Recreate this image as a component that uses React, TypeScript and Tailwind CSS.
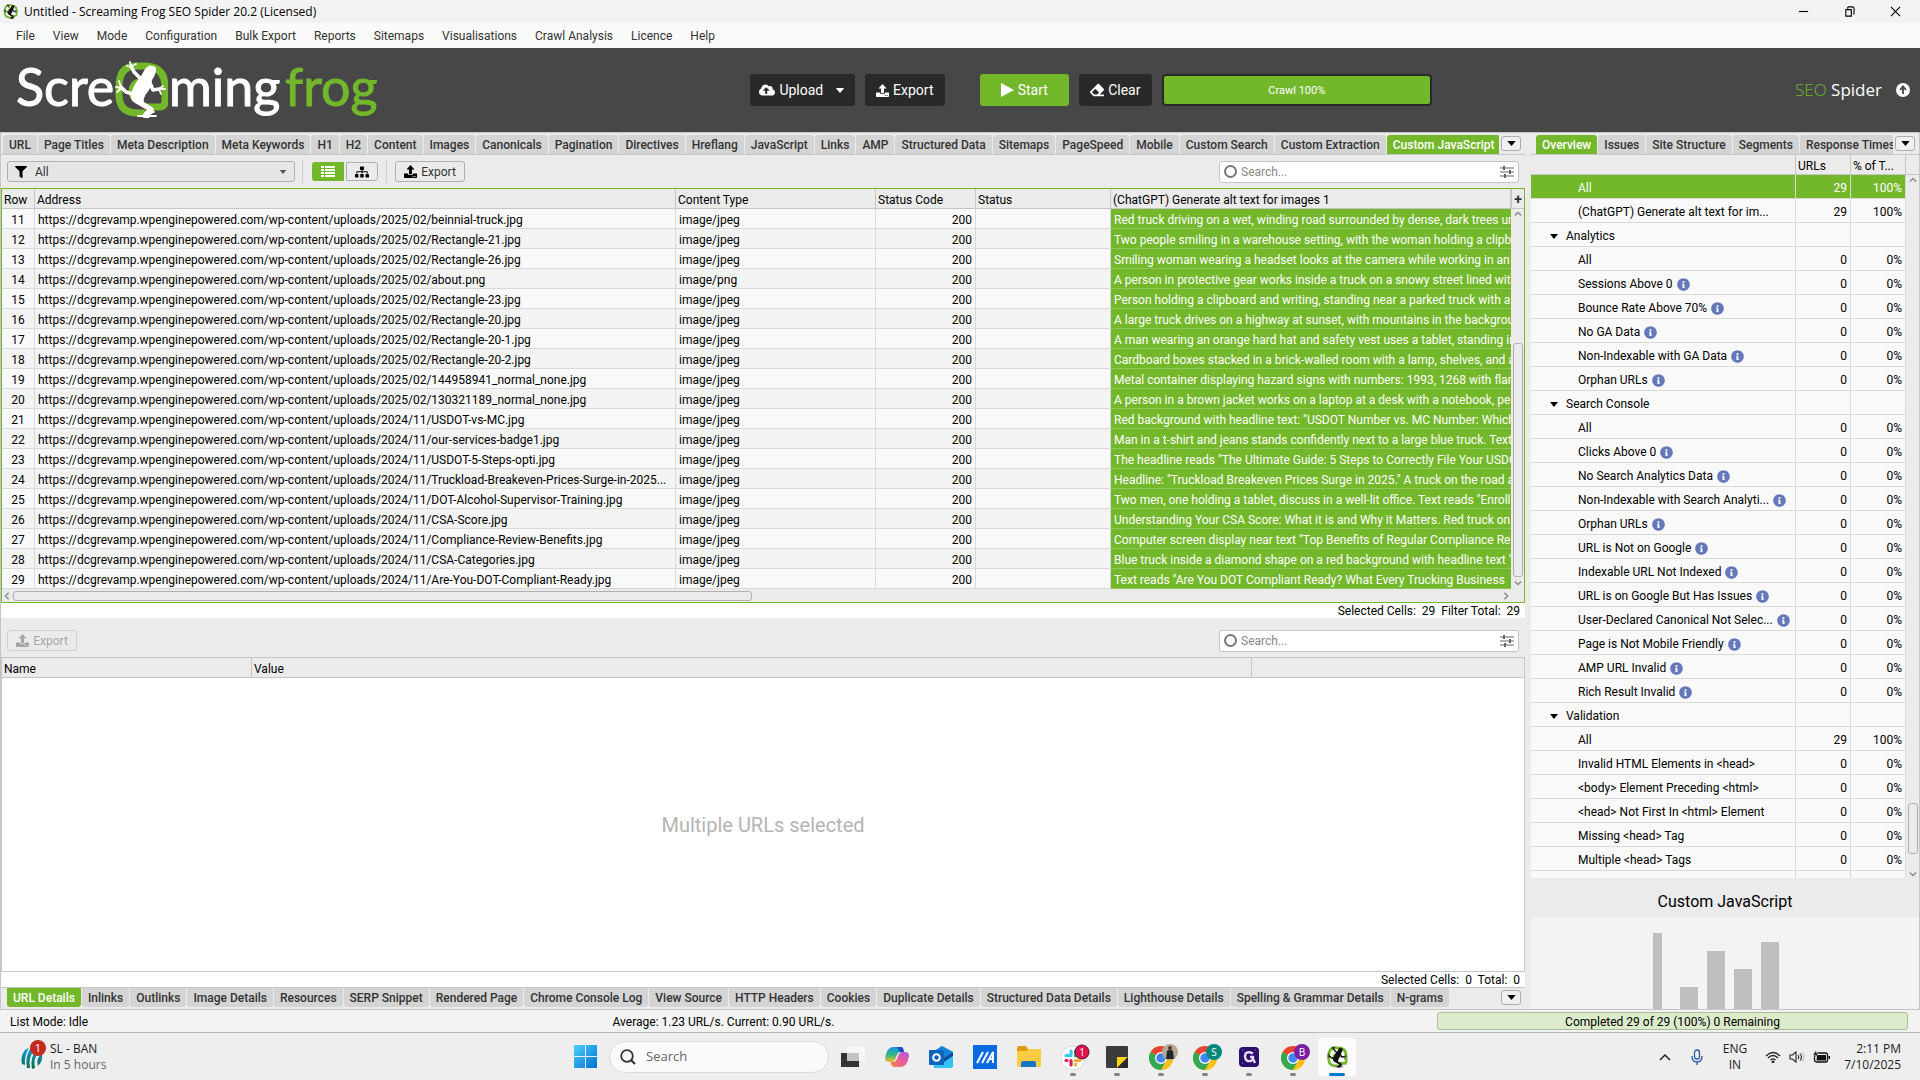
import type { ReactNode } from "react";
import { FaCloudUploadAlt, FaEraser, FaFilter, FaInfoCircle, FaSitemap } from "react-icons/fa";

const menu = ["File", "View", "Mode", "Configuration", "Bulk Export", "Reports", "Sitemaps", "Visualisations", "Crawl Analysis", "Licence", "Help"];

const mainTabs = [
  "URL", "Page Titles", "Meta Description", "Meta Keywords", "H1", "H2", "Content", "Images", "Canonicals",
  "Pagination", "Directives", "Hreflang", "JavaScript", "Links", "AMP", "Structured Data", "Sitemaps",
  "PageSpeed", "Mobile", "Custom Search", "Custom Extraction", "Custom JavaScript",
];

const sideTabs = ["Overview", "Issues", "Site Structure", "Segments", "Response Times"];

const detailTabs = [
  "URL Details", "Inlinks", "Outlinks", "Image Details", "Resources", "SERP Snippet", "Rendered Page",
  "Chrome Console Log", "View Source", "HTTP Headers", "Cookies", "Duplicate Details",
  "Structured Data Details", "Lighthouse Details", "Spelling & Grammar Details", "N-grams",
];

const base = "https://dcgrevamp.wpenginepowered.com/wp-content/uploads/";

const rows = [
  { path: "2025/02/beinnial-truck.jpg", alt: "Red truck driving on a wet, winding road surrounded by dense, dark trees un" },
  { path: "2025/02/Rectangle-21.jpg", alt: "Two people smiling in a warehouse setting, with the woman holding a clipb" },
  { path: "2025/02/Rectangle-26.jpg", alt: "Smiling woman wearing a headset looks at the camera while working in an" },
  { path: "2025/02/about.png", alt: "A person in protective gear works inside a truck on a snowy street lined wit" },
  { path: "2025/02/Rectangle-23.jpg", alt: "Person holding a clipboard and writing, standing near a parked truck with a" },
  { path: "2025/02/Rectangle-20.jpg", alt: "A large truck drives on a highway at sunset, with mountains in the backgrou" },
  { path: "2025/02/Rectangle-20-1.jpg", alt: "A man wearing an orange hard hat and safety vest uses a tablet, standing in" },
  { path: "2025/02/Rectangle-20-2.jpg", alt: "Cardboard boxes stacked in a brick-walled room with a lamp, shelves, and a" },
  { path: "2025/02/144958941_normal_none.jpg", alt: "Metal container displaying hazard signs with numbers: 1993, 1268 with flam" },
  { path: "2025/02/130321189_normal_none.jpg", alt: "A person in a brown jacket works on a laptop at a desk with a notebook, pe" },
  { path: "2024/11/USDOT-vs-MC.jpg", alt: 'Red background with headline text: "USDOT Number vs. MC Number: Which' },
  { path: "2024/11/our-services-badge1.jpg", alt: "Man in a t-shirt and jeans stands confidently next to a large blue truck. Text" },
  { path: "2024/11/USDOT-5-Steps-opti.jpg", alt: 'The headline reads "The Ultimate Guide: 5 Steps to Correctly File Your USDO' },
  { path: "2024/11/Truckload-Breakeven-Prices-Surge-in-2025...", alt: 'Headline: "Truckload Breakeven Prices Surge in 2025." A truck on the road a' },
  { path: "2024/11/DOT-Alcohol-Supervisor-Training.jpg", alt: 'Two men, one holding a tablet, discuss in a well-lit office. Text reads "Enroll' },
  { path: "2024/11/CSA-Score.jpg", alt: "Understanding Your CSA Score: What it is and Why it Matters. Red truck on" },
  { path: "2024/11/Compliance-Review-Benefits.jpg", alt: 'Computer screen display near text "Top Benefits of Regular Compliance Re' },
  { path: "2024/11/CSA-Categories.jpg", alt: 'Blue truck inside a diamond shape on a red background with headline text "' },
  { path: "2024/11/Are-You-DOT-Compliant-Ready.jpg", alt: 'Text reads "Are You DOT Compliant Ready? What Every Trucking Business' },
];

type TreeRow = { label: string; group?: boolean; info?: boolean; urls?: number; pct?: string };

const tree: TreeRow[] = [
  { label: "All", urls: 29, pct: "100%" },
  { label: "(ChatGPT) Generate alt text for im...", urls: 29, pct: "100%" },
  { label: "Analytics", group: true },
  { label: "All" },
  { label: "Sessions Above 0", info: true },
  { label: "Bounce Rate Above 70%", info: true },
  { label: "No GA Data", info: true },
  { label: "Non-Indexable with GA Data", info: true },
  { label: "Orphan URLs", info: true },
  { label: "Search Console", group: true },
  { label: "All" },
  { label: "Clicks Above 0", info: true },
  { label: "No Search Analytics Data", info: true },
  { label: "Non-Indexable with Search Analyti...", info: true },
  { label: "Orphan URLs", info: true },
  { label: "URL is Not on Google", info: true },
  { label: "Indexable URL Not Indexed", info: true },
  { label: "URL is on Google But Has Issues", info: true },
  { label: "User-Declared Canonical Not Selec...", info: true },
  { label: "Page is Not Mobile Friendly", info: true },
  { label: "AMP URL Invalid", info: true },
  { label: "Rich Result Invalid", info: true },
  { label: "Validation", group: true },
  { label: "All", urls: 29, pct: "100%" },
  { label: "Invalid HTML Elements in <head>" },
  { label: "<body> Element Preceding <html>" },
  { label: "<head> Not First In <html> Element" },
  { label: "Missing <head> Tag" },
  { label: "Multiple <head> Tags" },
];

function Frog({ color, className }: { color: string; className?: string }) {
  return (
    <svg viewBox="0 0 54 58" className={className} aria-hidden="true">
      <path d="M32 46H46q5 0 5-6V26Q51 5 30 5H22Q5 5 5 26v8Q5 52 24 52h7" fill="none" stroke="#73b72b" strokeWidth="7" />
      <path d="M36 20Q18 17 17 30q0 8 9 9" fill="none" stroke="#73b72b" strokeWidth="5" />
      <path d="M31 8q4-5 7-3 5 0 4 5-1 5-4 9-1 9-6 14-3 5-2 8l8 5q4 2 0 6l-3 5h-5l3-8-12-7q-7-4-3-12 3-9 8-13z" fill={color} />
      <g fill="none" stroke={color} strokeLinecap="round" strokeLinejoin="round">
        <path d="M27 18 20 11 17 5M36 22l3 7 6-1M19 33l-7-2-5-5M33 51l-3 4" strokeWidth="3.6" />
        <path d="M17 6 13 5M17 5 16 1M18 5l4-2M45 28l4-3M45 28l6 0M45 28l2 5M7 27l-5-1M7 26 5 20M8 27l-5 4M30 55h-6M30 55h12M34 53l6-2M32 54l5-7" strokeWidth="1.8" />
      </g>
    </svg>
  );
}

function UploadIcon({ className }: { className?: string }) {
  return (
    <svg viewBox="0 0 16 16" className={className} fill="currentColor" aria-hidden="true">
      <path d="M8 0 3 5.500h3.200V11h3.600V5.500H13z" />
      <path fillRule="evenodd" d="M0 10.500h5V12h6v-1.500h5V15q0 1-1 1H1q-1 0-1-1zM10.500 13.500v1H12v-1zM13 13.500v1h1.500v-1z" />
    </svg>
  );
}

function Caret({ className }: { className?: string }) {
  return (
    <svg viewBox="0 0 10 6" className={className} fill="currentColor" aria-hidden="true">
      <path d="M0 0h10L5 6z" />
    </svg>
  );
}

function Chevron({ className }: { className: string }) {
  return (
    <svg viewBox="0 0 10 10" className={`size-2 shrink-0 ${className}`} fill="none" stroke="#8c8c8c" strokeWidth="1.8" aria-hidden="true">
      <path d="M1 7l4-4 4 4" />
    </svg>
  );
}

function Tabs({ items, active, bottom }: { items: string[]; active: string; bottom?: boolean }) {
  return (
    <div className="flex min-w-0 flex-1 gap-px overflow-hidden">
      {items.map((t) => (
        <button
          key={t}
          className={`h-[19px] shrink-0 px-1.5 text-xs font-medium ${bottom ? "rounded-b-[3px] leading-[18px]" : "rounded-t-[3px] leading-5"} ${
            t === active ? "bg-[#73b72b] text-white" : "bg-[#d4d4d4] text-[#333]"
          }`}
        >
          {t}
        </button>
      ))}
    </div>
  );
}

function MoreTabs({ label }: { label: string }) {
  return (
    <button aria-label={label} className="flex h-[15px] w-5 shrink-0 items-center justify-center rounded-[3px] border border-[#adadad] bg-[#f0f0f0] text-black">
      <Caret className="h-[5px] w-[9px]" />
    </button>
  );
}

function SearchBox({ label }: { label: string }) {
  return (
    <div className="ml-auto flex h-[22px] w-[300px] items-center rounded-[3px] border border-[#c4c4c4] bg-white px-1 text-[#777]">
      <span className="size-[13px] rounded-full border-2 border-[#777]" />
      <input aria-label={label} placeholder="Search..." className="min-w-0 flex-1 bg-transparent px-1 text-xs outline-none placeholder:text-[#888]" />
      <svg viewBox="0 0 14 12" className="h-3 w-3.5" stroke="#666" strokeWidth="1" aria-hidden="true">
        <path d="M0 2h14M0 6h14M0 10h14" />
        <path d="M4 0v4M10 4v4M5 8v4" strokeWidth="2" />
      </svg>
    </div>
  );
}

function DarkButton({ children, className }: { children: ReactNode; className: string }) {
  return <button className={`flex h-8 items-center justify-center gap-1 rounded-[3px] text-sm text-white ${className}`}>{children}</button>;
}

function Header() {
  return (
    <header className="flex h-[84px] shrink-0 items-center bg-[#474747]">
      <div className="w-[39%]">
        <svg viewBox="0 0 400 84" className="h-[84px] w-[400px]" role="img" aria-label="Screaming frog">
          <g fontFamily="Lato, sans-serif" fontSize="52" strokeWidth="1">
            <text x="16" y="58" fill="#fff" stroke="#fff">Scre</text>
            <text x="169" y="58" fill="#fff" stroke="#fff">ming</text>
            <text x="285" y="58" fill="#73b72b" stroke="#73b72b">frog</text>
          </g>
          <svg x="114" y="13" width="54" height="58"><Frog color="#fff" /></svg>
        </svg>
      </div>
      <DarkButton className="ml-px w-[105px] bg-[#292929]">
        <FaCloudUploadAlt className="size-4" />
        Upload
        <Caret className="ml-2 h-[5px] w-[10px]" />
      </DarkButton>
      <DarkButton className="ml-2.5 w-20 bg-[#292929]">
        <UploadIcon className="size-[13px]" />
        Export
      </DarkButton>
      <DarkButton className="ml-[35px] w-[89px] bg-[#73b72b]">
        <svg viewBox="0 0 13 14" className="h-3.5 w-[13px]" fill="currentColor" aria-hidden="true"><path d="M0 0l13 7-13 7z" /></svg>
        Start
      </DarkButton>
      <DarkButton className="ml-2.5 w-[73px] bg-[#292929]">
        <FaEraser className="size-3.5" />
        Clear
      </DarkButton>
      <div className="ml-2.5 flex h-8 w-[270px] items-center justify-center rounded-[4px] border-2 border-[#292929] bg-[#73b72b] pt-0.5 text-[11px] text-white">
        Crawl 100%
      </div>
      <div className="ml-auto flex items-center pr-2.5">
        <span className="font-['Open_Sans',sans-serif] text-[17px] text-white">
          <span className="font-light text-[#73b72b]">SEO</span> Spider
        </span>
        <svg viewBox="0 0 14 14" className="ml-3.5 size-3.5" aria-hidden="true">
          <circle cx="7" cy="7" r="7" fill="#fff" />
          <path d="M7 11V4M4 7l3-3.500L10 7" fill="none" stroke="#474747" strokeWidth="1.8" />
        </svg>
      </div>
    </header>
  );
}

function CrawlTable() {
  const head = "border-r border-b border-[#c6c6c6] bg-[#ebebeb] px-0.5 pt-[3px] text-left font-normal";
  const cell = "border-r border-b border-[#dadada] pt-[3px]";
  return (
    <div className="border border-[#73b72b] bg-[#ebebeb]">
      <div className="flex">
        <table className="w-full table-fixed border-separate border-spacing-0 text-xs leading-4 text-black">
          <colgroup>
            <col className="w-[33px]" />
            <col className="w-[641px]" />
            <col className="w-[200px]" />
            <col className="w-[100px]" />
            <col className="w-[135px]" />
            <col />
          </colgroup>
          <thead>
            <tr>
              <th className={head}>Row</th>
              <th className={head}>Address</th>
              <th className={head}>Content Type</th>
              <th className={head}>Status Code</th>
              <th className={head}>Status</th>
              <th className={head}>(ChatGPT) Generate alt text for images 1</th>
            </tr>
          </thead>
          <tbody>
            {rows.map((r, i) => (
              <tr key={r.path} className="bg-[#f9f9f9] even:bg-[#f3f3f3]">
                <td className={`${cell} text-center`}>{i + 11}</td>
                <td className={`${cell} overflow-hidden px-[3px] whitespace-nowrap`}>{base + r.path}</td>
                <td className={`${cell} px-[3px]`}>{r.path.endsWith(".png") ? "image/png" : "image/jpeg"}</td>
                <td className={`${cell} px-[3px] text-right`}>200</td>
                <td className={cell} />
                <td className="overflow-hidden border-b border-[#8fc65a] bg-[#73b72b] pt-[3px] pl-[3px] whitespace-nowrap text-white">{r.alt}</td>
              </tr>
            ))}
          </tbody>
        </table>
        <div className="flex w-[13px] shrink-0 flex-col items-center">
          <button aria-label="Add column" className="flex h-5 w-full items-center justify-center border-b border-l border-[#c6c6c6] text-sm leading-none font-bold text-[#333]">+</button>
          <Chevron className="mt-px" />
          <div className="mt-auto h-[234px] w-2.5 rounded-[3px] border border-[#b0b0b0]" />
          <Chevron className="my-0.5 rotate-180" />
        </div>
      </div>
      <div className="flex h-[13px] items-center pr-3.5">
        <Chevron className="ml-px -rotate-90" />
        <div className="ml-0.5 h-2.5 w-[49%] rounded-[3px] border border-[#b0b0b0]" />
        <Chevron className="ml-auto rotate-90" />
      </div>
    </div>
  );
}

function Overview() {
  const line = "border-r border-b border-[#dadada] pt-[3px]";
  const head = "border-r border-b border-[#c6c6c6] px-0.5 pt-[3px] text-left font-normal";
  return (
    <aside className="flex w-[389px] shrink-0 flex-col border-r border-[#c6c6c6]">
      <div className="flex h-[22px] shrink-0 items-end gap-0.5 border-b border-[#c6c6c6] pr-1 pl-[5px]">
        <Tabs items={sideTabs} active="Overview" />
        <div className="self-center"><MoreTabs label="More overview tabs" /></div>
      </div>
      <div className="flex min-h-0 flex-1">
        <div className="min-w-0 flex-1 overflow-hidden">
          <table className="w-full table-fixed border-separate border-spacing-0 text-xs text-black">
            <colgroup>
              <col />
              <col className="w-[55px]" />
              <col className="w-[55px]" />
            </colgroup>
            <thead className="leading-4">
              <tr>
                <th className={head} aria-label="Filter" />
                <th className={head}>URLs</th>
                <th className={head}>% of T...</th>
              </tr>
            </thead>
            <tbody className="leading-5">
              {tree.map((t, i) => (
                <tr key={i} className={i === 0 ? "bg-[#73b72b] text-white" : "bg-[#f9f9f9]"}>
                  <td className={`${line} whitespace-nowrap ${i === 0 ? "border-[#8fc65a]" : ""} ${t.group ? "pl-[19px]" : "pl-[47px]"}`}>
                    <div className="flex items-center gap-1">
                      {t.group && <Caret className="mr-1 h-[7px] w-2" />}
                      {t.label}
                      {t.info && <FaInfoCircle className="size-[13px] text-[#6678bb]" />}
                    </div>
                  </td>
                  <td className={`${line} pr-[3px] text-right ${i === 0 ? "border-[#8fc65a]" : ""}`}>{!t.group && (t.urls ?? 0)}</td>
                  <td className={`${line} pr-[3px] text-right ${i === 0 ? "border-[#8fc65a]" : ""}`}>{!t.group && (t.pct ?? "0%")}</td>
                </tr>
              ))}
              <tr className="bg-[#f9f9f9]">
                <td className={`${line} h-6`} />
                <td className={line} />
                <td className={line} />
              </tr>
            </tbody>
          </table>
        </div>
        <div className="flex w-[13px] shrink-0 flex-col items-center">
          <div className="h-5 w-full shrink-0 border-b border-[#c6c6c6]" />
          <Chevron className="mt-px" />
          <div className="mt-auto h-[51px] w-2.5 rounded-[3px] border border-[#b0b0b0]" />
          <Chevron className="mt-4 rotate-180" />
        </div>
      </div>
      <h2 className="flex h-[39px] shrink-0 items-center justify-center pt-2 text-base text-black">Custom JavaScript</h2>
      <div className="flex h-[92px] shrink-0 justify-center bg-[#f3f3f3] pr-[18px]">
        <svg viewBox="0 0 126 92" className="h-[92px] w-[126px]" fill="#bfbfbf" role="img" aria-label="Custom JavaScript chart">
          <path d="M0 16h9v76H0zM27 70h18v22H27zM54 34h18v58H54zM81 52h18v40H81zM108 25h18v67h-18z" />
        </svg>
      </div>
    </aside>
  );
}

function Chrome({ badge }: { badge: ReactNode }) {
  return (
    <svg viewBox="0 0 30 26" className="ml-[5px] h-[26px] w-[30px]" aria-hidden="true">
      <circle cx="12" cy="14" r="12" fill="#fbc116" />
      <path d="M12 14 1.600 8A12 12 0 0 1 22.400 8H12z" fill="#ea4335" />
      <path d="M12 14 1.600 8A12 12 0 0 0 12 26l5.200-9z" fill="#34a853" />
      <path d="M12 8H22.400A12 12 0 0 1 12 26l5.200-9z" fill="#fbc116" />
      <circle cx="12" cy="14" r="6" fill="#fff" />
      <circle cx="12" cy="14" r="4.700" fill="#4285f4" />
      {badge}
    </svg>
  );
}

function Letter({ fill, children }: { fill: string; children: string }) {
  return (
    <>
      <circle cx="21" cy="8" r="8" fill={fill} />
      <text x="21" y="11.500" textAnchor="middle" fontSize="10" fill="#fff">{children}</text>
    </>
  );
}

const apps: { name: string; open?: boolean; icon: ReactNode }[] = [
  {
    name: "Task view",
    icon: (
      <svg viewBox="0 0 24 24" className="size-6">
        <path d="M0 8h18v14H0z" fill="#333" />
        <path d="M6 2h18v14H6z" fill="#f7f7f7" />
        <path d="M6 8h12v8H6z" fill="#c4c4c4" />
      </svg>
    ),
  },
  {
    name: "Copilot",
    icon: (
      <svg viewBox="0 0 24 24" className="size-6">
        <defs>
          <linearGradient id="cp1" x1="0" y1="0" x2="0" y2="1"><stop stopColor="#1c8fe8" /><stop offset=".5" stopColor="#2fb58a" /><stop offset="1" stopColor="#f0c02b" /></linearGradient>
          <linearGradient id="cp2" x1="1" y1="0" x2="0" y2="1"><stop stopColor="#a35be6" /><stop offset=".5" stopColor="#ec5a9a" /><stop offset="1" stopColor="#fb8d3c" /></linearGradient>
        </defs>
        <path d="M8 2h8q2 0 2.500 3L19 7h-4q-2 0-3 3l-2 5q-1 2-3 2H4q-4 0-4-4Q2 2 8 2z" fill="url(#cp1)" />
        <path d="M16 22H9q-2 0-3-3l-.5-2H9q2 0 3-3l2-5q1-2 3-2h3q4 0 4 4-2 11-8 11z" fill="url(#cp2)" />
        <path d="M12 2h4q2 0 2.500 3L19 7h-4z" fill="#1a4fc4" />
      </svg>
    ),
  },
  {
    name: "Outlook",
    icon: (
      <svg viewBox="0 0 24 24" className="size-6">
        <path d="M4 7l9-6 11 6v14q0 2-2 2H5z" fill="#35c3f2" />
        <path d="M4 7l9-6 11 6-9 7z" fill="#1683d8" />
        <path d="M15 13l9-6v4l-9 6z" fill="#0c4fa0" />
        <rect y="5" width="15" height="15" rx="1" fill="#0f64bd" />
        <circle cx="7.500" cy="12.500" r="3.300" fill="none" stroke="#fff" strokeWidth="2" />
      </svg>
    ),
  },
  {
    name: "MyASUS",
    icon: (
      <svg viewBox="0 0 24 24" className="size-6">
        <path d="M0 0h24v24H0z" fill="#0a6be0" />
        <path d="M4 18 10 7M9 18l6-11M14 18l6-11v11M17 14h3" fill="none" stroke="#fff" strokeWidth="2" />
      </svg>
    ),
  },
  {
    name: "File Explorer",
    icon: (
      <svg viewBox="0 0 24 24" className="size-6">
        <path d="M0 3q0-2 2-2h7l2 3h11q2 0 2 2v4H0z" fill="#dc9c0e" />
        <path d="M0 6h9l2-2h11q2 0 2 2v14q0 2-2 2H2q-2 0-2-2z" fill="#fbcb42" />
        <path d="M4 22v-4q0-2 2-2h11q2 0 2 2v4z" fill="#1577c4" />
      </svg>
    ),
  },
  {
    name: "Slack",
    open: true,
    icon: (
      <svg viewBox="0 0 30 26" className="ml-[5px] h-[26px] w-[30px]">
        <circle cx="12" cy="14" r="12" fill="#fff" stroke="#d6d6d6" />
        <g strokeWidth="3.200" strokeLinecap="round">
          <path d="M10 7v4M5 11.500h5" stroke="#36c5f0" />
          <path d="M14.500 7v5M19 12h-1" stroke="#2eb67d" />
          <path d="M14.500 16.500H19M14.500 21v-1" stroke="#ecb22e" />
          <path d="M10 16.500V21M5 16.500h1" stroke="#e01e5a" />
        </g>
        <circle cx="21" cy="8" r="7" fill="#e0134f" stroke="#5c1230" />
        <text x="21" y="11.500" textAnchor="middle" fontSize="10" fill="#fff">1</text>
      </svg>
    ),
  },
  {
    name: "Sticky Notes",
    open: true,
    icon: (
      <svg viewBox="0 0 24 24" className="size-6">
        <rect x="1" y="1" width="22" height="22" rx="1" fill="#3b3b3b" />
        <path d="M12 12h11L12 23z" fill="#fbd40b" />
        <path d="M12 23l11-11v11z" fill="#2a2a2a" />
      </svg>
    ),
  },
  {
    name: "Chrome",
    open: true,
    icon: (
      <Chrome
        badge={
          <>
            <circle cx="21" cy="8" r="8" fill="#b3a893" />
            <path d="M17 15l1-8q3-3 6 0l1 8z" fill="#23282b" />
            <circle cx="21" cy="4" r="2" fill="#4d3a2e" />
          </>
        }
      />
    ),
  },
  { name: "Chrome S", open: true, icon: <Chrome badge={<Letter fill="#00897b">S</Letter>} /> },
  {
    name: "Grabber",
    open: true,
    icon: (
      <svg viewBox="0 0 24 24" className="size-6">
        <rect x="2" y="2" width="20" height="20" rx="4" fill="#2b0f6b" />
        <path d="M16 8.500Q9 5 8 11q0 6 6 5l2-2v-2h-3M16 14l2 4" fill="none" stroke="#e6dcff" strokeWidth="2.400" />
        <path d="M5 5h1M18 5h1M5 18h1M7 8h1" stroke="#9a7bff" />
      </svg>
    ),
  },
  { name: "Chrome B", open: true, icon: <Chrome badge={<Letter fill="#7b1fa2">B</Letter>} /> },
];

function Taskbar() {
  return (
    <footer className="grid h-[47px] shrink-0 grid-cols-[1fr_auto_1fr] items-center bg-[#eee] font-['Open_Sans',sans-serif] text-xs text-[#222]">
      <div className="flex items-center gap-1 pl-5">
        <svg viewBox="0 0 26 34" className="h-[34px] w-[26px]" aria-hidden="true">
          <defs>
            <linearGradient id="ball" x1="0" y1="0" x2="0" y2="1"><stop stopColor="#0c9ddb" /><stop offset="1" stopColor="#056b4c" /></linearGradient>
          </defs>
          <path d="M5 10q-5 7-3 14l3 1q-1-9 4-17zM10 9q-5 8-3 19h3q-2-10 4-18zM15 12q-5 7-3 17l3-1q-2-9 3-15zM20 15q-4 5-2 11 5-5 4-11z" fill="url(#ball)" />
          <circle cx="18" cy="8" r="8" fill="#c42b1c" />
          <text x="18" y="12" textAnchor="middle" fontSize="11" fill="#fff">1</text>
        </svg>
        <div className="leading-4">
          <div>SL - BAN</div>
          <div className="text-[#666]">In 5 hours</div>
        </div>
      </div>
      <div className="flex h-full items-center pl-2.5">
        <button aria-label="Start menu">
          <svg viewBox="0 0 23 23" className="size-[23px]">
            <defs>
              <linearGradient id="win" x1="0" y1="0" x2="1" y2="1"><stop stopColor="#4cd0fb" /><stop offset="1" stopColor="#0070d2" /></linearGradient>
            </defs>
            <path d="M0 0h11v11H0zM12 0h11v11H12zM0 12h11v11H0zM12 12h11v11H12z" fill="url(#win)" />
          </svg>
        </button>
        <label className="mr-0.5 ml-3 flex h-8 w-[220px] items-center gap-2.5 rounded-full border border-[#dcdcdc] bg-[#fafafa] px-2.5">
          <svg viewBox="0 0 16 16" className="size-4" fill="none" stroke="#333" strokeWidth="1.800" aria-hidden="true">
            <circle cx="7" cy="7" r="5.800" />
            <path d="M11 11l4 4" strokeWidth="2.200" />
          </svg>
          <input aria-label="Search the taskbar" placeholder="Search" className="min-w-0 flex-1 bg-transparent text-[13px] outline-none placeholder:text-[#666]" />
        </label>
        {apps.map((a) => (
          <button key={a.name} aria-label={a.name} className="relative flex h-full w-11 items-center justify-center">
            {a.icon}
            {a.open && <span className="absolute bottom-1 h-[3px] w-1.5 rounded-full bg-[#858585]" />}
          </button>
        ))}
        <button aria-label="Screaming Frog" className="relative ml-[3px] flex h-[38px] w-[38px] items-center justify-center rounded bg-[#fbfbfb]">
          <Frog color="#111" className="size-[22px]" />
          <span className="absolute bottom-0 h-[3px] w-4 rounded-full bg-[#0078d4]" />
        </button>
      </div>
      <div className="flex items-center justify-end pr-[19px] leading-4">
        <svg viewBox="0 0 12 8" className="h-2 w-3" fill="none" stroke="#222" strokeWidth="1.500" aria-hidden="true"><path d="M1 7l5-5 5 5" /></svg>
        <svg viewBox="0 0 12 16" className="mr-5 ml-5 h-4 w-3" fill="none" stroke="#2a5cab" strokeWidth="1.300" aria-hidden="true">
          <rect x="3.500" y="1" width="5" height="9" rx="2.500" />
          <path d="M1 7q0 6 5 6t5-6M6 13v3" />
        </svg>
        <div className="text-center">ENG<br />IN</div>
        <svg viewBox="0 0 16 12" className="ml-[18px] h-3 w-4" fill="none" stroke="#222" strokeWidth="1.200" aria-hidden="true">
          <path d="M1 5q7-7 14 0M3 7q5-5 10 0M5.500 9.200q2.500-2.500 5 0" />
          <circle cx="8" cy="11" r=".8" fill="#222" />
        </svg>
        <svg viewBox="0 0 16 12" className="ml-2 h-3 w-4" fill="none" stroke="#222" strokeWidth="1.100" aria-hidden="true">
          <path d="M1 4h2.500L7 1v10L3.500 8H1zM9 4q1.500 2 0 4M11 2.500q3 3.500 0 7" />
          <path d="M13 1q4 5 0 10" stroke="#bbb" />
        </svg>
        <svg viewBox="0 0 17 13" className="ml-2 h-[13px] w-[17px]" aria-hidden="true">
          <rect x="1.500" y="3" width="13" height="9" rx="2" fill="none" stroke="#111" strokeWidth="1.300" />
          <path d="M4 5h9v5.500H3.500zM15.500 6v3h1.500V6z" fill="#111" />
          <path d="M3 0L0 5h2.500L2 8l3.500-5H3z" fill="#111" stroke="#eee" strokeWidth=".5" />
        </svg>
        <div className="ml-3.5 text-right">2:11 PM<br />7/10/2025</div>
      </div>
    </footer>
  );
}

export default function App() {
  return (
    <div className="flex h-screen flex-col overflow-hidden bg-[#ebebeb] font-[Roboto,sans-serif] text-xs text-[#333]">
      <div className="flex h-[23px] shrink-0 items-center gap-1.5 bg-[#f3f3f3] pl-[3px] font-['Open_Sans',sans-serif] text-black">
        <Frog color="#111" className="size-[15px]" />
        <span>Untitled - Screaming Frog SEO Spider 20.2 (Licensed)</span>
        <div className="ml-auto flex items-center pr-0.5">
          {["M1 6h10", "M2 4h6v7H2zM4 3V2q0-1 1-1h4q2 0 2 2v5q0 1-1 1", "M1 1l10 10M11 1 1 11"].map((d, i) => (
            <button key={d} aria-label={["Minimise", "Restore", "Close"][i]} className="flex h-[21px] w-[46px] items-center justify-center">
              <svg viewBox="0 0 12 12" className="size-[11px]" fill="none" stroke="#000" strokeWidth="1.200"><path d={d} /></svg>
            </button>
          ))}
        </div>
      </div>
      <nav className="flex h-[25px] shrink-0 items-center bg-[#fafafa] pl-[7px]">
        {menu.map((m) => (
          <button key={m} className="px-[9px]">{m}</button>
        ))}
      </nav>
      <Header />

      <main className="flex min-h-0 flex-1 gap-1.5 border-t border-b border-[#c6c6c6]">
        <section className="flex min-w-0 flex-1 flex-col border-l border-[#c6c6c6]">
          <div className="flex h-[22px] shrink-0 items-end gap-0.5 border-b border-[#c6c6c6] pr-1 pl-0.5">
            <Tabs items={mainTabs} active="Custom JavaScript" />
            <div className="self-center"><MoreTabs label="More tabs" /></div>
          </div>
          <div className="flex h-[33px] shrink-0 items-center pr-1.5 pl-1.5">
            <div className="relative flex items-center">
              <FaFilter className="absolute left-2 size-3 text-black" />
              <select aria-label="Filter" className="h-[21px] w-[288px] appearance-none rounded-[3px] border border-[#b0b0b0] bg-[#e6e6e6] pl-[27px] text-xs">
                <option>All</option>
              </select>
              <Caret className="absolute right-2 h-1 w-2 text-[#555]" />
            </div>
            <div className="ml-[7px] h-[23px] w-px bg-[#cfcfcf]" />
            <button aria-label="List view" className="ml-[9px] flex h-[19px] w-8 items-center justify-center rounded-l-[3px] bg-[#73b72b] text-white">
              <svg viewBox="0 0 14 11" className="h-[11px] w-3.5" fill="currentColor" aria-hidden="true">
                <path d="M0 0h3v2H0zM4 0h10v2H4zM0 3h3v2H0zM4 3h10v2H4zM0 6h3v2H0zM4 6h10v2H4zM0 9h3v2H0zM4 9h10v2H4z" />
              </svg>
            </button>
            <button aria-label="Tree view" className="ml-0.5 flex h-[19px] w-8 items-center justify-center rounded-r-[3px] border border-[#b0b0b0] text-black">
              <FaSitemap className="size-3.5" />
            </button>
            <div className="ml-2 h-[23px] w-px bg-[#cfcfcf]" />
            <button className="ml-2 flex h-[21px] w-[70px] items-center justify-center gap-1 rounded-[3px] border border-[#b0b0b0]">
              <UploadIcon className="size-[13px] text-black" />
              Export
            </button>
            <SearchBox label="Search URLs" />
          </div>
          <CrawlTable />
          <div className="h-[15px] shrink-0 bg-white pr-[5px] text-right leading-4 whitespace-pre text-black">{"Selected Cells:  29  Filter Total:  29"}</div>

          <div className="flex h-[39px] shrink-0 items-center pt-1.5 pr-1.5 pl-1.5">
            <button disabled className="flex h-[21px] w-[70px] items-center justify-center gap-1 rounded-[3px] border border-[#d0d0d0] text-[#a6a6a6]">
              <UploadIcon className="size-[13px]" />
              Export
            </button>
            <SearchBox label="Search details" />
          </div>
          <div className="flex min-h-0 flex-1 flex-col border border-[#c6c6c6] bg-white">
            <table className="w-full table-fixed border-separate border-spacing-0 bg-[#ebebeb] text-left leading-4 text-black">
              <thead>
                <tr>
                  <th className="w-[250px] border-r border-b border-[#c6c6c6] px-0.5 pt-[3px] font-normal">Name</th>
                  <th className="w-[1000px] border-r border-b border-[#c6c6c6] px-0.5 pt-[3px] font-normal">Value</th>
                  <th className="border-b border-[#c6c6c6]" aria-label="Spacer" />
                </tr>
              </thead>
            </table>
            <div className="flex flex-1 items-center justify-center text-xl text-[#b4b4b4]">Multiple URLs selected</div>
          </div>
          <div className="h-4 shrink-0 border-b border-[#c6c6c6] bg-white pr-[5px] text-right leading-4 whitespace-pre text-black">{"Selected Cells:  0  Total:  0"}</div>
          <div className="flex h-[21px] shrink-0 items-start pr-1 pl-1.5">
            <Tabs items={detailTabs} active="URL Details" bottom />
            <div className="mt-0.5"><MoreTabs label="More detail tabs" /></div>
          </div>
        </section>
        <Overview />
      </main>

      <div className="flex h-[23px] shrink-0 items-center border-b border-[#b9b9b9] bg-[#f3f3f3] pr-3 pl-2.5 text-black">
        <div className="flex flex-1 pt-0.5">
          <span className="flex-1">List Mode: Idle</span>
          <span>Average: 1.23 URL/s. Current: 0.90 URL/s.</span>
          <span className="flex-1" />
        </div>
        <div className="flex h-[18px] w-[471px] items-center justify-center rounded-[3px] border border-[#a9bd97] bg-[#dcebcb] pt-0.5">
          Completed 29 of 29 (100%) 0 Remaining
        </div>
      </div>
      <Taskbar />
    </div>
  );
}
